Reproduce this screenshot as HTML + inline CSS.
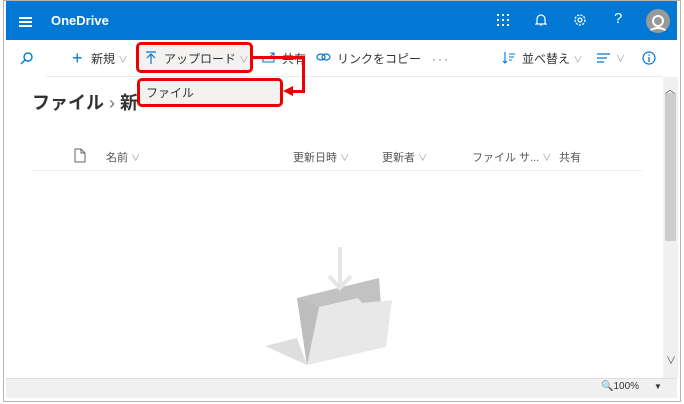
<!DOCTYPE html>
<html><head><meta charset="utf-8"><style>
*{margin:0;padding:0;box-sizing:border-box}
body{width:684px;height:404px;overflow:hidden;background:#fff;font-family:"Liberation Sans","Noto Sans CJK JP",sans-serif;position:relative}
.a{position:absolute}
.t{font-size:12px;color:#333;white-space:nowrap}
.h{font-size:11px;color:#555;white-space:nowrap}
.c{color:#999;font-size:9px}
</style></head><body>
<div class="a" style="left:3px;top:0;width:678px;height:402px;border:1px solid #b5b5b5"></div>
<div class="a" style="left:6px;top:1px;width:671px;height:39px;background:#0078d4"></div>
<div class="a" style="left:19px;top:21px;width:13px;height:2px;background:#fff;box-shadow:0 4px 0 #fff,0 -4px 0 #fff"></div>
<div class="a" style="left:51px;top:13px;color:#fff;font-weight:bold;font-size:13px">OneDrive</div>
<svg class="a" style="left:497px;top:14px" width="12" height="12"><g fill="#fff"><rect x="0" y="0" width="2" height="2"/><rect x="5" y="0" width="2" height="2"/><rect x="10" y="0" width="2" height="2"/><rect x="0" y="5" width="2" height="2"/><rect x="5" y="5" width="2" height="2"/><rect x="10" y="5" width="2" height="2"/><rect x="0" y="10" width="2" height="2"/><rect x="5" y="10" width="2" height="2"/><rect x="10" y="10" width="2" height="2"/></g></svg>
<svg class="a" style="left:535px;top:13px" width="12" height="14"><path d="M2 10V6a4 4 0 0 1 8 0v4l1 1H1z M5 12h2" fill="none" stroke="#fff" stroke-width="1.2"/></svg>
<svg class="a" style="left:572px;top:12px" width="16" height="16"><circle cx="8" cy="8" r="5" fill="none" stroke="#fff" stroke-width="1.3" stroke-dasharray="2.2 1.2"/><circle cx="8" cy="8" r="2" fill="none" stroke="#fff" stroke-width="1.2"/></svg>
<div class="a" style="left:614px;top:10px;color:#fff;font-size:15px">?</div>
<div class="a" style="left:646px;top:9px;width:24px;height:24px;border-radius:50%;background:#999;overflow:hidden"><div class="a" style="left:6px;top:6px;width:12px;height:12px;border:2px solid #fff;border-radius:50%"></div><div class="a" style="left:3px;top:18px;width:18px;height:10px;border:2px solid #fff;border-radius:50%"></div></div>
<svg class="a" style="left:20px;top:51px" width="14" height="14"><circle cx="8" cy="6" r="4" fill="none" stroke="#0078d4" stroke-width="1.4"/><path d="M5 9L1 13" stroke="#0078d4" stroke-width="1.4"/></svg>
<div class="a" style="left:72px;top:49px;color:#0078d4;font-size:18px;line-height:18px">+</div>
<div class="a t" style="left:91px;top:50px">新規 <span class="c">∨</span></div>
<div class="a" style="left:136px;top:42px;width:117px;height:31px;border:3px solid #e00;border-radius:5px;background:#f3f2f1"></div>
<svg class="a" style="left:145px;top:51px" width="12" height="14"><path d="M1 1h10M6 13V3M2 7l4-4 4 4" fill="none" stroke="#0078d4" stroke-width="1.2"/></svg>
<div class="a t" style="left:164px;top:50px">アップロード <span class="c">∨</span></div>
<svg class="a" style="left:262px;top:51px" width="14" height="12"><path d="M1 5v6h11V5M6 8l6-6M8 2h4v4" fill="none" stroke="#0078d4" stroke-width="1.1"/></svg>
<div class="a t" style="left:282px;top:50px">共有</div>
<svg class="a" style="left:316px;top:52px" width="15" height="10"><ellipse cx="5" cy="5" rx="4" ry="3" fill="none" stroke="#0078d4" stroke-width="1.2"/><ellipse cx="10" cy="5" rx="4" ry="3" fill="none" stroke="#0078d4" stroke-width="1.2"/></svg>
<div class="a t" style="left:337px;top:50px">リンクをコピー</div>
<div class="a t" style="left:432px;top:52px;color:#666;letter-spacing:2px">···</div>
<svg class="a" style="left:502px;top:51px" width="14" height="14"><path d="M3 1v11M1 10l2 2 2-2M7 3h6M7 6h5M7 9h3" fill="none" stroke="#0078d4" stroke-width="1.1"/></svg>
<div class="a t" style="left:522px;top:50px">並べ替え <span class="c">∨</span></div>
<svg class="a" style="left:597px;top:53px" width="14" height="10"><path d="M0 1h13M0 5h10M0 9h7" stroke="#0078d4" stroke-width="1.2"/></svg>
<div class="a t" style="left:616px;top:51px"><span class="c">∨</span></div>
<svg class="a" style="left:642px;top:51px" width="14" height="14"><circle cx="7" cy="7" r="6" fill="none" stroke="#0078d4" stroke-width="1.2"/><path d="M7 6v5M7 3.5v1.2" stroke="#0078d4" stroke-width="1.3"/></svg>
<div class="a" style="left:46px;top:76px;width:617px;height:1px;background:#eaeaea"></div>
<div class="a" style="left:32px;top:89px;font-size:18px;font-weight:bold;color:#333">ファイル <span style="font-weight:normal;color:#777">›</span> 新</div>
<div class="a" style="left:137px;top:78px;width:146px;height:29px;border:3px solid #e00;border-radius:5px;background:#f3f2f1"></div>
<div class="a t" style="left:146px;top:84px">ファイル</div>
<div class="a" style="left:253px;top:56px;width:52px;height:3px;background:#e00"></div>
<div class="a" style="left:302px;top:56px;width:3px;height:37px;background:#e00"></div>
<div class="a" style="left:292px;top:90px;width:13px;height:3px;background:#e00"></div>
<div class="a" style="left:283px;top:86px;width:0;height:0;border-top:5px solid transparent;border-bottom:5px solid transparent;border-right:10px solid #e00"></div>
<svg class="a" style="left:74px;top:148px" width="12" height="15"><path d="M1 1h6l4 4v9H1z M7 1v4h4" fill="none" stroke="#666" stroke-width="1"/></svg>
<div class="a h" style="left:106px;top:149px">名前 <span class="c">∨</span></div>
<div class="a h" style="left:293px;top:149px">更新日時 <span class="c">∨</span></div>
<div class="a h" style="left:382px;top:149px">更新者 <span class="c">∨</span></div>
<div class="a h" style="left:472px;top:149px">ファイル サ... <span class="c">∨</span></div>
<div class="a h" style="left:559px;top:149px">共有</div>
<div class="a" style="left:32px;top:170px;width:610px;height:1px;background:#eee"></div>
<svg class="a" style="left:260px;top:240px" width="150" height="135"><path d="M37 58l82-20 3 40-75 47z" fill="#c2c2c2"/><path d="M5 106l42 19-10-27z" fill="#dedede"/><path d="M59 67l39-9 4 5 30-3-6 47-79 18z" fill="#e8e8e8"/><path d="M37 58l10 67 12-58z" fill="#bdbdbd"/><path d="M80 7v38" stroke="#e6e6e6" stroke-width="4"/><path d="M69 36l11 12 11-12" fill="none" stroke="#e6e6e6" stroke-width="4"/></svg>
<div class="a" style="left:663px;top:77px;width:15px;height:301px;background:#f0f0f0"></div>
<div class="a" style="left:665px;top:93px;width:11px;height:148px;background:#cdcdcd"></div>
<div class="a" style="left:665px;top:81px;font-size:10px;color:#555">︿</div>
<div class="a" style="left:666px;top:352px;font-size:10px;color:#555">∨</div>
<div class="a" style="left:6px;top:378px;width:671px;height:20px;background:#f0f0f0;border-top:1px solid #ddd"></div>
<div class="a" style="left:601px;top:381px;font-size:10px;color:#333">🔍100%</div>
<div class="a" style="left:654px;top:382px;font-size:8px;color:#333">▼</div>
</body></html>
